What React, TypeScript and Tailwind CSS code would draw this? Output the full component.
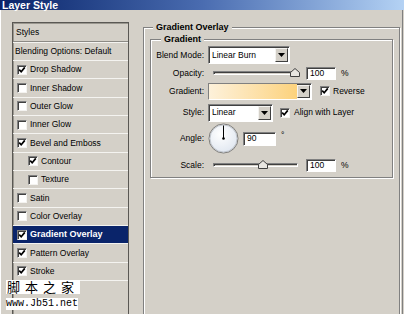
import React from "react";

type Item = { label: string; on?: boolean; indent?: boolean; active?: boolean };

const items: Item[] = [
  { label: "Drop Shadow", on: true },
  { label: "Inner Shadow" },
  { label: "Outer Glow" },
  { label: "Inner Glow" },
  { label: "Bevel and Emboss", on: true },
  { label: "Contour", on: true, indent: true },
  { label: "Texture", indent: true },
  { label: "Satin" },
  { label: "Color Overlay" },
  { label: "Gradient Overlay", on: true, active: true },
  { label: "Pattern Overlay", on: true },
  { label: "Stroke", on: true },
];

function Check({ on }: { on?: boolean }) {
  return (
    <span className="flex h-[10px] w-[10px] shrink-0 items-center justify-center border border-t-[#808080] border-l-[#808080] border-r-[#f4f3f0] border-b-[#f4f3f0] bg-white shadow-[inset_1px_1px_0_#404040]">
      {on && (
        <svg width="8" height="8" viewBox="0 0 8 8">
          <path d="M1.2 3.6 L3.2 5.8 L6.8 1.4" fill="none" stroke="#000" strokeWidth="1.7" />
        </svg>
      )}
    </span>
  );
}

function Arrow() {
  return (
    <span className="flex h-full w-[13px] shrink-0 items-center justify-center border border-t-[#f4f3f0] border-l-[#f4f3f0] border-r-[#404040] border-b-[#404040] bg-[#d4d0c8]">
      <svg width="7" height="4" viewBox="0 0 7 4">
        <path d="M0 0 H7 L3.5 4 Z" fill="#000" />
      </svg>
    </span>
  );
}

function Sunken({ className, children }: { className: string; children?: React.ReactNode }) {
  return (
    <div
      className={
        "flex items-center border border-t-[#808080] border-l-[#808080] border-r-white border-b-white shadow-[inset_1px_1px_0_#404040] " +
        className
      }
    >
      {children}
    </div>
  );
}

function Slider({ pos }: { pos: number }) {
  return (
    <div className="relative ml-[5px] flex h-[12px] w-[85px] items-center">
      <div className="h-[4px] w-full border border-t-[#808080] border-l-[#808080] border-r-white border-b-white shadow-[inset_1px_1px_0_#404040]" />
      <svg
        className="absolute top-[1px]"
        style={{ left: pos - 5 }}
        width="10"
        height="9"
        viewBox="0 0 10 9"
      >
        <path d="M0.5 8.5 V4.5 L5 0.5 L9.5 4.5 V8.5 Z" fill="#e8e6e1" stroke="#404040" />
      </svg>
    </div>
  );
}

function Label({ children }: { children: React.ReactNode }) {
  return <span className="w-[53px] shrink-0 text-right">{children}</span>;
}

export default function App() {
  return (
    <div className="relative flex h-[314px] w-[404px] flex-col overflow-hidden bg-[#d4d0c8] font-['Liberation_Sans',Arial,sans-serif] text-[8.5px] text-black">
      <div className="h-[10px] w-full shrink-0 bg-linear-to-r from-[#0a246a] via-[#4a6cb0] to-[#b4d2f4] pl-[2px] text-[10.5px] font-bold leading-[10px] text-white">
        Layer Style
      </div>

      <div className="flex flex-1 shadow-[inset_1px_0_0_#fff,inset_-1px_0_0_#d4d0c8,inset_-2px_0_0_#808080]">
        {/* styles list */}
        <div className="ml-[12px] mt-[12px] h-[300px] w-[117px] shrink-0 border border-[#5a5854] shadow-[inset_1px_1px_0_#9a978f]">
          <div className="flex h-[19px] items-center border-b border-[#8c8a85] pl-[3px] shadow-[0_1px_0_#f4f3f0]">
            Styles
          </div>
          <div className="mt-px flex h-[18px] items-center border-b border-[#f4f3f0] pl-[2px]">
            Blending Options: Default
          </div>
          {items.map((it) => (
            <div
              key={it.label}
              className={
                "flex h-[18.33px] items-center gap-[2px] border-b border-[#f4f3f0] " +
                (it.indent ? "pl-[15px] " : "pl-[4px] ") +
                (it.active ? "bg-[#0a246a] text-[9px] font-bold text-white" : "")
              }
            >
              <Check on={it.on} />
              <span className="ml-px">{it.label}</span>
            </div>
          ))}
        </div>

        {/* gradient overlay panel */}
        <div className="relative ml-[14px] mt-[17px] h-[300px] w-[257px] shrink-0 border border-[#808080] shadow-[inset_1px_1px_0_#fff,1px_1px_0_#fff]">
          <span className="absolute -top-[6px] left-[9px] bg-[#d4d0c8] px-[3px] text-[9px] font-bold leading-[11px]">
            Gradient Overlay
          </span>

          <div className="relative ml-[6px] mt-[11px] h-[139px] w-[243px] border border-[#808080] shadow-[inset_1px_1px_0_#fff,1px_1px_0_#fff]">
            <span className="absolute -top-[6px] left-[10px] bg-[#d4d0c8] px-[3px] text-[9px] font-bold leading-[11px]">
              Gradient
            </span>

            <div className="flex flex-col pt-[6px]">
              <div className="flex h-[18px] items-center gap-[4px]">
                <Label>Blend Mode:</Label>
                <Sunken className="h-[18px] w-[82px] bg-white">
                  <span className="flex-1 pl-[3px]">Linear Burn</span>
                  <div className="h-full py-[1px] pr-[1px]">
                    <Arrow />
                  </div>
                </Sunken>
              </div>

              <div className="flex h-[18px] items-center gap-[4px]">
                <Label>Opacity:</Label>
                <Slider pos={82} />
                <Sunken className="ml-[4px] h-[13px] w-[30px] bg-white pl-[3px]">100</Sunken>
                <span className="ml-[1px]">%</span>
              </div>

              <div className="flex h-[18px] items-center gap-[4px]">
                <Label>Gradient:</Label>
                <Sunken className="h-[17px] w-[104px] bg-white">
                  <div className="h-full flex-1 bg-linear-to-r from-[#fdf1da] to-[#fcd27c]" />
                  <div className="h-full py-[1px] pr-[1px]">
                    <Arrow />
                  </div>
                </Sunken>
                <span className="ml-[4px] flex items-center gap-[3px]">
                  <Check on />
                  Reverse
                </span>
              </div>

              <div className="mt-[3px] flex h-[19px] items-center gap-[4px]">
                <Label>Style:</Label>
                <Sunken className="h-[18px] w-[65px] bg-white">
                  <span className="flex-1 pl-[3px]">Linear</span>
                  <div className="h-full py-[1px] pr-[1px]">
                    <Arrow />
                  </div>
                </Sunken>
                <span className="ml-[3px] flex items-center gap-[4px]">
                  <Check on />
                  Align with Layer
                </span>
              </div>

              <div className="flex h-[33px] items-center gap-[4px]">
                <Label>Angle:</Label>
                <svg width="31" height="31" viewBox="0 0 31 31">
                  <defs>
                    <radialGradient id="dial" cx="0.4" cy="0.35" r="0.7">
                      <stop offset="0" stopColor="#ffffff" />
                      <stop offset="1" stopColor="#dfe6f0" />
                    </radialGradient>
                  </defs>
                  <circle cx="15.5" cy="15.5" r="14.5" fill="url(#dial)" stroke="#7d7b77" />
                  <circle cx="15.5" cy="15.5" r="13.5" fill="none" stroke="#b8bcc4" strokeWidth="0.8" />
                  <line x1="15.5" y1="15.5" x2="15.5" y2="2.5" stroke="#000" strokeWidth="1" />
                  <circle cx="15.5" cy="15.5" r="1.3" fill="#000" />
                </svg>
                <Sunken className="h-[14px] w-[33px] bg-white pl-[3px]">90</Sunken>
                <span className="-mt-[6px] ml-[1px]">°</span>
              </div>

              <div className="flex h-[20px] items-center gap-[4px]">
                <Label>Scale:</Label>
                <Slider pos={50} />
                <Sunken className="ml-[4px] h-[13px] w-[30px] bg-white pl-[3px]">100</Sunken>
                <span className="ml-[1px]">%</span>
              </div>
            </div>
          </div>
        </div>
      </div>

      {/* watermark */}
      <div className="absolute left-[6px] top-[280px] flex flex-col items-start">
        <span className="bg-white px-[1px] font-['Noto_Sans_CJK_SC',sans-serif] text-[13px] leading-[14px] tracking-[5px]">
          脚本之家
        </span>
        <span className="mt-[4px] bg-white font-['Liberation_Mono',monospace] text-[10px] leading-[12px]">
          www.Jb51.net
        </span>
      </div>
    </div>
  );
}
